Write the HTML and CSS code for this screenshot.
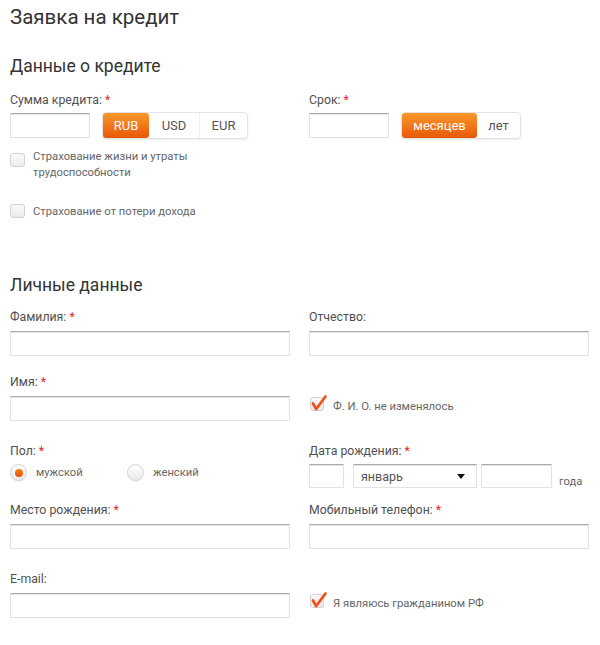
FILE: index.html
```html
<!DOCTYPE html>
<html lang="ru">
<head>
<meta charset="utf-8">
<title>Заявка на кредит</title>
<link rel="stylesheet" href="styles.css">
</head>
<body>
<div class="page">
  <h1 class="title">Заявка на кредит</h1>

  <h2 class="section-title section-title--credit">Данные о кредите</h2>
  <div class="cols">
    <div class="col">
      <div class="label">Сумма кредита: <span class="req">*</span></div>
      <div class="inline">
        <div class="field field--short"></div>
        <div class="seg">
          <span class="seg-btn seg-btn--active seg-btn--rub">RUB</span>
          <span class="seg-btn seg-btn--usd">USD</span>
          <span class="seg-btn seg-btn--eur">EUR</span>
        </div>
      </div>
      <div class="check check--ins1">
        <span class="check__box check__box--low"></span>
        <span class="check__text check__text--wrap">Страхование жизни и утраты трудоспособности</span>
      </div>
      <div class="check check--ins2">
        <span class="check__box"></span>
        <span class="check__text">Страхование от потери дохода</span>
      </div>
    </div>
    <div class="col">
      <div class="label">Срок: <span class="req">*</span></div>
      <div class="inline">
        <div class="field field--short"></div>
        <div class="seg">
          <span class="seg-btn seg-btn--active seg-btn--months">месяцев</span>
          <span class="seg-btn seg-btn--years">лет</span>
        </div>
      </div>
    </div>
  </div>

  <h2 class="section-title section-title--personal">Личные данные</h2>

  <div class="cols row">
    <div class="col">
      <div class="label">Фамилия: <span class="req">*</span></div>
      <div class="field field--full"></div>
    </div>
    <div class="col">
      <div class="label">Отчество:</div>
      <div class="field field--full"></div>
    </div>
  </div>

  <div class="cols row row--2">
    <div class="col">
      <div class="label">Имя: <span class="req">*</span></div>
      <div class="field field--full"></div>
    </div>
    <div class="col col--offset">
      <div class="check">
        <span class="check__box check__box--small">
          <svg class="check__mark" width="20" height="20" viewBox="0 0 20 20"><path d="M3 9.5 L6.2 15 L15.5 2.5" fill="none" stroke="#f0521c" stroke-width="2.8" stroke-linecap="round" stroke-linejoin="round"/></svg>
        </span>
        <span class="check__text check__text--down">Ф. И. О. не изменялось</span>
      </div>
    </div>
  </div>

  <div class="cols row row--3">
    <div class="col">
      <div class="label">Пол: <span class="req">*</span></div>
      <div class="radios">
        <div class="radio radio--first"><span class="radio__dot radio__dot--on"></span>мужской</div>
        <div class="radio"><span class="radio__dot"></span>женский</div>
      </div>
    </div>
    <div class="col">
      <div class="label">Дата рождения: <span class="req">*</span></div>
      <div class="date">
        <div class="field field--day"></div>
        <div class="field field--month select">январь<span class="select__arrow"></span></div>
        <div class="field field--year"></div>
        <span class="date__suffix">года</span>
      </div>
    </div>
  </div>

  <div class="cols row row--4">
    <div class="col">
      <div class="label">Место рождения: <span class="req">*</span></div>
      <div class="field field--full"></div>
    </div>
    <div class="col">
      <div class="label">Мобильный телефон: <span class="req">*</span></div>
      <div class="field field--full"></div>
    </div>
  </div>

  <div class="cols row row--5">
    <div class="col">
      <div class="label">E-mail:</div>
      <div class="field field--full"></div>
    </div>
    <div class="col col--offset">
      <div class="check">
        <span class="check__box check__box--small">
          <svg class="check__mark" width="20" height="20" viewBox="0 0 20 20"><path d="M3 9.5 L6.2 15 L15.5 2.5" fill="none" stroke="#f0521c" stroke-width="2.8" stroke-linecap="round" stroke-linejoin="round"/></svg>
        </span>
        <span class="check__text check__text--down">Я являюсь гражданином РФ</span>
      </div>
    </div>
  </div>
</div>
</body>
</html>
```

FILE: styles.css
```css
* { box-sizing: border-box; }

body {
  margin: 0;
  background: #fff;
  font-family: Roboto, "Noto Sans", "Liberation Sans", sans-serif;
  color: #4d4d4d;
}

.page {
  width: 600px;
  padding: 4px 10px 0;
}

.title {
  margin: 0;
  font-size: 20.5px;
  line-height: 26px;
  font-weight: 400;
  color: #333;
}

.section-title {
  margin: 0;
  font-size: 17.5px;
  line-height: 22px;
  font-weight: 400;
  color: #333;
}

.section-title--credit { margin-top: 25px; margin-bottom: 15px; }
.section-title--personal { margin-top: 54px; margin-bottom: 13px; }

.cols {
  display: grid;
  grid-template-columns: 280px 280px;
  column-gap: 19px;
  align-items: start;
}

.row--2 { margin-top: 18px; }
.row--3 { margin-top: 22px; }
.row--4 { margin-top: 14px; }
.row--5 { margin-top: 22px; }

.col--offset { padding-top: 23px; padding-left: 1px; }

.label {
  font-size: 12.3px;
  line-height: 16px;
  color: #505050;
}

.req { color: #e8262a; }

.inline {
  display: flex;
  align-items: center;
  gap: 12px;
  height: 27px;
  margin-top: 4px;
}

.field {
  height: 25px;
  background: #fff;
  border: 1px solid #e2e2e2;
  border-top-color: #a9a9a9;
  box-shadow: inset 0 1px 1px rgba(0, 0, 0, 0.1);
}

.field--short { width: 80px; }
.field--full { width: 280px; margin-top: 6px; }

.seg {
  display: flex;
  height: 27px;
  border: 1px solid #e3e3e3;
  border-radius: 4px;
  background: #fff;
  box-shadow: 0 1px 2px rgba(0, 0, 0, 0.08);
}

.seg-btn {
  display: flex;
  align-items: center;
  justify-content: center;
  font-size: 13px;
  color: #555;
}

.seg-btn + .seg-btn { border-left: 1px solid #f1f1f1; }
.seg-btn--active + .seg-btn { border-left: 0; }

.seg-btn--active {
  color: #fff;
  border-radius: 3px;
  background: linear-gradient(#f9992a, #e95709);
}

.seg-btn--rub { width: 46px; }
.seg-btn--usd { width: 50px; }
.seg-btn--eur { width: 48px; }
.seg-btn--months { width: 75px; }
.seg-btn--years { width: 43px; }

.check {
  display: flex;
  align-items: flex-start;
}

.check--ins1 { margin-top: 10px; }
.check--ins2 { margin-top: 23px; }

.check__box {
  position: relative;
  flex: none;
  width: 15px;
  height: 14px;
  margin-right: 8px;
  border: 1px solid #d2d2d2;
  border-radius: 3px;
  background: linear-gradient(#fafafa, #ebebeb);
}

.check__box--low { margin-top: 4px; }
.check__box--small { width: 14px; height: 14px; margin-right: 9px; }

.check__mark {
  position: absolute;
  left: -1px;
  top: -4px;
}

.check__text {
  font-size: 11.25px;
  line-height: 16px;
  color: #666;
}

.check__text--wrap { max-width: 165px; }
.check__text--down { margin-top: 2px; }

.radios {
  display: flex;
  align-items: center;
  height: 17px;
  margin-top: 5px;
}

.radio {
  display: flex;
  align-items: center;
  font-size: 11.2px;
  color: #666;
}

.radio--first { width: 117px; }

.radio__dot {
  display: flex;
  align-items: center;
  justify-content: center;
  width: 17px;
  height: 17px;
  margin-right: 9px;
  border: 1px solid #d3d3d3;
  border-radius: 50%;
  background: linear-gradient(#fff, #e9e9e9);
  box-shadow: 0 1px 1px rgba(0, 0, 0, 0.06);
}

.radio__dot--on::after {
  content: "";
  width: 8px;
  height: 8px;
  border-radius: 50%;
  background: linear-gradient(#f8821f, #e4500b);
}

.date {
  display: flex;
  align-items: flex-start;
  margin-top: 5px;
}

.date .field { height: 24px; }
.field--day { width: 35px; margin-right: 9px; }
.field--month { width: 124px; margin-right: 4px; }
.field--year { width: 71px; margin-right: 7px; }

.select {
  display: flex;
  align-items: center;
  justify-content: space-between;
  padding: 0 11px 0 7px;
  font-size: 12.5px;
  color: #555;
}

.select__arrow {
  width: 0;
  height: 0;
  border-left: 4px solid transparent;
  border-right: 4px solid transparent;
  border-top: 5px solid #111;
}

.date__suffix {
  align-self: flex-end;
  font-size: 11.2px;
  line-height: 16px;
  color: #666;
  margin-bottom: -2px;
}
```
